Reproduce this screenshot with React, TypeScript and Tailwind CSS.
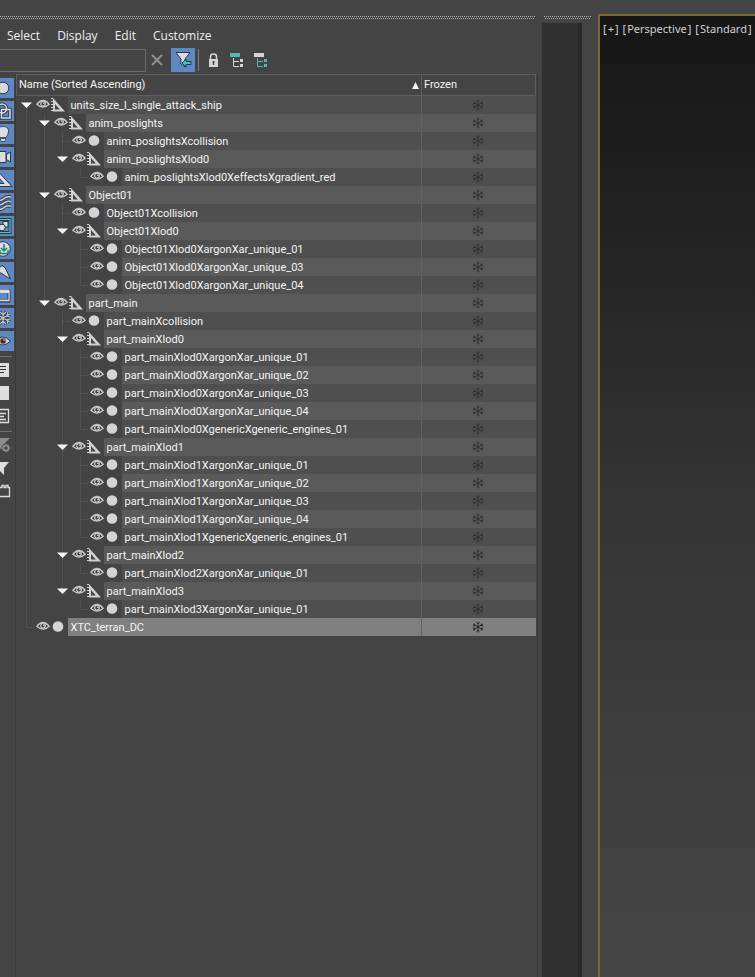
import type { ReactNode } from "react";

type Node = { name: string; children?: Node[]; selected?: boolean };

const leaf = (name: string): Node => ({ name });

const scene: Node[] = [
  {
    name: "units_size_l_single_attack_ship",
    children: [
      {
        name: "anim_poslights",
        children: [
          leaf("anim_poslightsXcollision"),
          { name: "anim_poslightsXlod0", children: [leaf("anim_poslightsXlod0XeffectsXgradient_red")] },
        ],
      },
      {
        name: "Object01",
        children: [
          leaf("Object01Xcollision"),
          {
            name: "Object01Xlod0",
            children: [
              leaf("Object01Xlod0XargonXar_unique_01"),
              leaf("Object01Xlod0XargonXar_unique_03"),
              leaf("Object01Xlod0XargonXar_unique_04"),
            ],
          },
        ],
      },
      {
        name: "part_main",
        children: [
          leaf("part_mainXcollision"),
          {
            name: "part_mainXlod0",
            children: [
              leaf("part_mainXlod0XargonXar_unique_01"),
              leaf("part_mainXlod0XargonXar_unique_02"),
              leaf("part_mainXlod0XargonXar_unique_03"),
              leaf("part_mainXlod0XargonXar_unique_04"),
              leaf("part_mainXlod0XgenericXgeneric_engines_01"),
            ],
          },
          {
            name: "part_mainXlod1",
            children: [
              leaf("part_mainXlod1XargonXar_unique_01"),
              leaf("part_mainXlod1XargonXar_unique_02"),
              leaf("part_mainXlod1XargonXar_unique_03"),
              leaf("part_mainXlod1XargonXar_unique_04"),
              leaf("part_mainXlod1XgenericXgeneric_engines_01"),
            ],
          },
          { name: "part_mainXlod2", children: [leaf("part_mainXlod2XargonXar_unique_01")] },
          { name: "part_mainXlod3", children: [leaf("part_mainXlod3XargonXar_unique_01")] },
        ],
      },
    ],
  },
  { name: "XTC_terran_DC", selected: true },
];

type Row = { node: Node; guides: boolean[]; last: boolean };

function flatten(nodes: Node[], guides: boolean[] = []): Row[] {
  return nodes.flatMap((node, i) => {
    const last = i === nodes.length - 1;
    return [{ node, guides, last }, ...flatten(node.children ?? [], [...guides, !last])];
  });
}

const rows = flatten(scene);

function Guide({ on }: { on: boolean }) {
  return (
    <svg className="h-[18px] w-[18px] shrink-0" viewBox="0 0 18 18" aria-hidden="true">
      {on && <path d="M9.5 0V18" stroke="#525252" />}
    </svg>
  );
}

function Branch({ row }: { row: Row }) {
  const top = row.guides.length === 0 && row.node.children;
  return (
    <svg className="h-[18px] w-[18px] shrink-0" viewBox="0 0 18 18" aria-hidden="true">
      {!top && <path d="M9.5 0V9" stroke="#525252" />}
      {!row.last && <path d="M9.5 9V18" stroke="#525252" />}
      {row.node.children ? (
        <path d="M4 6.500H15L9.500 12Z" fill="#f8f8f8" />
      ) : (
        <path d="M10 9.500H18" stroke="#5c5c5c" strokeDasharray="1 1" />
      )}
    </svg>
  );
}

function Eye() {
  return (
    <svg className="ml-px h-[14px] w-[14px] shrink-0" viewBox="0 0 14 14" aria-hidden="true">
      <path d="M.8 6.300Q7-1.300 13.200 6.300Q7 12 .8 6.300Z" fill="#3c3c3c" stroke="#c8c8c8" strokeWidth="1.300" />
      <circle cx="7" cy="5.800" r="2.300" fill="#3c3c3c" stroke="#d0d0d0" strokeWidth="1.200" />
      <circle cx="7.800" cy="5.200" r=".8" fill="#e0e0e0" />
    </svg>
  );
}

function Geometry() {
  return (
    <svg className="h-[14px] w-[16px] shrink-0" viewBox="0 0 16 14" aria-hidden="true">
      <circle cx="8" cy="6.500" r="5.300" fill="#d4d4d4" />
    </svg>
  );
}

function Helper() {
  return (
    <svg className="h-[14px] w-[16px] shrink-0" viewBox="0 0 16 14" aria-hidden="true">
      <path d="M3 0L15 13.500H3Z M5 6V11.500H9.800Z" fill="#d0d0d0" fillRule="evenodd" />
      <path d="M1 .5H3M1 3.500H3M1 6.500H3M1 9.500H3M1 12.500H3" stroke="#d0d0d0" />
    </svg>
  );
}

function Snowflake({ dark }: { dark?: boolean }) {
  return (
    <svg
      className="mx-auto block h-3 w-3"
      viewBox="0 0 12 12"
      fill="none"
      stroke={dark ? "#202020" : "#303030"}
      role="img"
      aria-label="Not frozen"
    >
      <path d="M6 .5V11.500M1.200 3.200L10.800 8.800M1.200 8.800L10.800 3.200M4.500 1.500L6 3L7.500 1.500M4.500 10.500L6 9L7.500 10.500M.8 5L3 4.500L2.500 2.500M11.200 7L9 7.500L9.500 9.500M.8 7L3 7.500L2.500 9.500M11.200 5L9 4.500L9.500 2.500" strokeWidth=".9" />
    </svg>
  );
}

const dark = "#26384f";
const filters: { label: string; art: ReactNode }[] = [
  { label: "Geometry", art: <circle cx="3" cy="10" r="5.800" fill="#d9d9d9" stroke={dark} /> },
  {
    label: "Shapes",
    art: (
      <g fill="none" stroke={dark} strokeWidth="3.400">
        <circle cx="2" cy="7.500" r="4.500" />
        <path d="M1.500 8.500H10V17H1.500Z" />
        <g stroke="#dddddd" strokeWidth="1.500">
          <circle cx="2" cy="7.500" r="4.500" />
          <path d="M1.500 8.500H10V17H1.500Z" />
        </g>
      </g>
    ),
  },
  {
    label: "Lights",
    art: (
      <g stroke={dark} strokeWidth=".8" fill="#dddddd">
        <path d="M0 13.500Q-1 11-2.500 9Q-3 2.500 3 2.500T8.500 8Q8 11 6 13.500Z" />
        <path d="M.5 14.500H5.500V16L4.500 17.500H1.500L.5 16Z" />
      </g>
    ),
  },
  {
    label: "Cameras",
    art: (
      <g fill="#dddddd" stroke={dark}>
        <path d="M-2 4.500H6V15.500H-2Z" />
        <path d="M6.500 7.500L10.500 5V15L6.500 12.500Z" />
      </g>
    ),
  },
  {
    label: "Helpers",
    art: <path d="M-5-2L12 16.500H-5Z M-2 7V13.500H4Z" fill="#dddddd" stroke={dark} fillRule="evenodd" />,
  },
  {
    label: "Space warps",
    art: (
      <g fill="none">
        <path d="M-1 7Q2 8 4 5.500T11 4M-1 11.500Q2 12.500 4 10T11 8.500M-1 16Q2 17 4 14.500T11 13" stroke={dark} strokeWidth="3.400" />
        <path d="M-1 7Q2 8 4 5.500T11 4M-1 11.500Q2 12.500 4 10T11 8.500M-1 16Q2 17 4 14.500T11 13" stroke="#d0d0d0" strokeWidth="1.500" />
      </g>
    ),
  },
  {
    label: "Groups",
    art: (
      <g fill="none">
        <path d="M-2 3.500H10V16.500H-2" stroke={dark} strokeWidth="3" />
        <path d="M-2 3.500H10V16.500H-2" stroke="#5cc4b6" strokeWidth="1.200" />
        <path d="M3 5.500H8V11H3Z" fill="#dddddd" stroke={dark} />
        <circle cx="2" cy="11.500" r="3.300" fill="#dddddd" stroke={dark} />
      </g>
    ),
  },
  {
    label: "Containers",
    art: (
      <g>
        <circle cx="3" cy="10" r="7.300" fill="#dddddd" stroke={dark} />
        <path d="M4 5V12M1 9L4 12L7 9M0 11V14.500H8V11" fill="none" stroke="#168070" strokeWidth="1.500" />
      </g>
    ),
  },
  { label: "Bones", art: <path d="M-3 8L2 3.500L5 5.500L10.500 17L-1 10Z" fill="#dddddd" stroke={dark} /> },
  {
    label: "Hidden objects",
    art: (
      <g fill="none">
        <path d="M-2 5.500H9V16H-2" stroke={dark} strokeWidth="3" />
        <path d="M-2 4.500H9.500V8H-2Z" fill="#dddddd" />
        <path d="M-2 15.500H9V6" stroke="#dddddd" strokeWidth="1.300" />
      </g>
    ),
  },
  {
    label: "Frozen objects",
    art: (
      <g fill="none">
        <path d="M3 3V17M-4 6L10 14M-4 14L10 6M0 4L3 7L6 4M0 16L3 13L6 16M10 9L7 8L8 4M10 11L7 12L8 16" stroke={dark} strokeWidth="2.600" />
        <path d="M3 3V17M-4 6L10 14M-4 14L10 6M0 4L3 7L6 4M0 16L3 13L6 16M10 9L7 8L8 4M10 11L7 12L8 16" stroke="#c4c4c4" strokeWidth="1.200" />
      </g>
    ),
  },
  {
    label: "Visibility",
    art: (
      <g>
        <path d="M-6 10Q2 2 10.500 10Q2 18-6 10Z" fill="#dddddd" stroke={dark} />
        <circle cx="3" cy="10" r="3" fill="#33302c" stroke="#a38c70" />
        <circle cx="4" cy="9" r=".8" fill="#eeeeee" />
      </g>
    ),
  },
];

const actions: { label: string; art: ReactNode }[][] = [
  [
    {
      label: "Select all",
      art: (
        <g>
          <path d="M0 3H9V17H0Z" fill="#dddddd" />
          <path d="M0 6.500H6M0 9.500H6M0 12.500H4" stroke="#333333" />
        </g>
      ),
    },
    { label: "Select none", art: <path d="M0 3H9V17H0Z" fill="#dddddd" /> },
    {
      label: "Invert selection",
      art: <path d="M0 3.500H8.500V16.500H0M0 7.500H6M0 10.500H4M0 13.500H6" fill="none" stroke="#dddddd" strokeWidth="1.300" />,
    },
  ],
  [
    {
      label: "Configure filter",
      art: (
        <g fill="#8c8c8c">
          <path d="M-6 3H10L4 9V17L0 13V10Z" />
          <circle cx="6" cy="13" r="4.500" fill="#444444" />
          <circle cx="6" cy="13" r="2.600" fill="none" stroke="#8c8c8c" strokeWidth="1.800" />
          <path d="M6 8.500V17.500M1.500 13H10.500M3 10L9 16M9 10L3 16" stroke="#8c8c8c" />
          <circle cx="6" cy="13" r="1.500" fill="#444444" />
        </g>
      ),
    },
    { label: "Filter", art: <path d="M-4 4H9L4 10V17L0 13V10Z" fill="#dddddd" /> },
    {
      label: "Extensions",
      art: <path d="M0 6.500H2V4.500H4V6.500H6V4.500H8V6.500H9.500V15.500H0" fill="none" stroke="#dddddd" strokeWidth="1.300" />,
    },
  ],
];

function Rail() {
  return (
    <nav aria-label="Display filters" className="flex w-4 shrink-0 flex-col gap-[3px] border-r border-[#3a3a3a] pt-1">
      {filters.map((f) => (
        <button key={f.label} type="button" aria-label={f.label} className="h-5 w-[14px] overflow-hidden bg-[#5e88c4]">
          <svg className="block h-5 w-[14px]" viewBox="0 0 14 20" aria-hidden="true">{f.art}</svg>
        </button>
      ))}
      {actions.map((group, i) => (
        <div key={i} className="flex flex-col gap-[3px]">
          <hr className="mt-[2px] w-3 border-t border-[#707070]" />
          {group.map((a) => (
            <button key={a.label} type="button" aria-label={a.label} className="h-5 w-[14px] overflow-hidden">
              <svg className="block h-5 w-[14px]" viewBox="0 0 14 20" aria-hidden="true">{a.art}</svg>
            </button>
          ))}
        </div>
      ))}
    </nav>
  );
}

function HierarchyIcon({ head, tail }: { head: string; tail: string }) {
  return (
    <svg className="h-4 w-4" viewBox="0 0 16 16" aria-hidden="true">
      <path d="M1 1H11V5H1Z" fill={head} />
      <path d="M4.500 6V14.500H10M4.500 9.500H10" fill="none" stroke={tail} />
      <path d="M11 7H14V10H11ZM11 12H14V15H11Z" fill={tail} />
    </svg>
  );
}

function Toolbar() {
  return (
    <div className="mb-px flex h-[26px] items-center">
      <input
        type="text"
        aria-label="Find"
        className="h-[23px] w-[146px] border border-l-0 border-[#6a6a6a] bg-[#444444] px-1 text-[11px] text-white outline-none"
      />
      <button type="button" aria-label="Clear search" className="mr-1 flex h-6 w-[21px] items-center justify-center">
        <svg className="h-3 w-3" viewBox="0 0 12 12" aria-hidden="true">
          <path d="M1 1L11 11M11 1L1 11" stroke="#929292" strokeWidth="1.800" />
        </svg>
      </button>
      <button type="button" aria-label="Filter selection" className="flex h-6 w-6 items-center justify-center bg-[#5e88c4]">
        <svg className="h-5 w-5" viewBox="0 0 20 20" aria-hidden="true">
          <path d="M3 2.500H17L12 9V17L8 14V9Z" fill="#dddddd" stroke={dark} />
          <path d="M9 13L13 9V11.500H18V14.500H13V17Z" fill="#48c4b4" stroke={dark} />
        </svg>
      </button>
      <span className="ml-[3px] h-[22px] w-px bg-[#808080]" />
      <div className="ml-[6px] flex gap-2">
        <button type="button" aria-label="Lock" className="h-4 w-4">
          <svg className="h-4 w-4" viewBox="0 0 16 16" aria-hidden="true">
            <path d="M5.500 8V4.500Q5.500 2 8.500 2T11.500 4.500V8" fill="none" stroke="#d5d5d5" strokeWidth="1.500" />
            <path d="M4 7H13V15H4Z" fill="#d5d5d5" />
            <path d="M8.500 9V13M7.500 10H9.500" stroke="#444444" strokeWidth="1.300" />
          </svg>
        </button>
        <button type="button" aria-label="Select children" className="h-4 w-4">
          <HierarchyIcon head="#4fb9ae" tail="#d5d5d5" />
        </button>
        <button type="button" aria-label="Select dependents" className="h-4 w-4">
          <HierarchyIcon head="#d5d5d5" tail="#4fb9ae" />
        </button>
      </div>
    </div>
  );
}

function rowColor(selected: boolean | undefined, i: number) {
  if (selected) return "bg-[#808080]";
  return i % 2 === 0 ? "bg-[#4f4f4f]" : "bg-[#5a5a5a]";
}

function Tree() {
  return (
    <table className="w-[520px] table-fixed border-collapse self-start font-[Roboto,sans-serif] text-[11px] leading-5 text-[#f4f4f4]">
      <colgroup>
        <col className="w-[405px]" />
        <col />
      </colgroup>
      <thead>
        <tr className="h-[21px]">
          <th scope="col" className="border border-[#5e5e5e] p-0 font-normal">
            <button type="button" className="flex w-full items-center justify-between pr-[2px] pl-[2px]">
              Name (Sorted Ascending)
              <svg className="h-[7px] w-[7px]" viewBox="0 0 7 7" aria-hidden="true">
                <path d="M3.500 0L7 7H0Z" fill="#f4f4f4" />
              </svg>
            </button>
          </th>
          <th scope="col" className="border border-[#5e5e5e] p-0 pl-[2px] text-left font-normal">Frozen</th>
        </tr>
      </thead>
      <tbody>
        {rows.map((row, i) => (
          <tr key={row.node.name} className="h-[18px]" aria-selected={!!row.node.selected}>
            <td className="p-0">
              <div className="flex h-[18px] items-center">
                {row.guides.map((on, g) => (
                  <Guide key={g} on={on} />
                ))}
                <Branch row={row} />
                <Eye />
                {row.node.children ? <Helper /> : <Geometry />}
                <span className={`ml-[2px] h-[18px] flex-1 pl-[3px] ${rowColor(row.node.selected, i)}`}>{row.node.name}</span>
              </div>
            </td>
            <td className={`border-l border-[#626262] p-0 pr-[2px] ${rowColor(row.node.selected, i)}`}>
              <Snowflake dark={row.node.selected} />
            </td>
          </tr>
        ))}
      </tbody>
    </table>
  );
}

function Grip() {
  return (
    <div className="flex h-[3px] flex-col justify-between">
      <div className="h-px bg-[repeating-linear-gradient(90deg,#b0b0b0_0px_1px,#444444_1px_2px)]" />
      <div className="h-px bg-[repeating-linear-gradient(90deg,#444444_0px_1px,#b0b0b0_1px_2px)]" />
    </div>
  );
}

const menus = ["Select", "Display", "Edit", "Customize"];
const viewportLabels = ["+", "Perspective", "Standard"];

export default function App() {
  return (
    <div className="flex min-h-screen bg-[#444444] font-['Noto_Sans',sans-serif] text-[#eeeeee]">
      <section aria-label="Scene explorer" className="flex w-[538px] shrink-0 flex-col pt-4">
        <div className="mr-[3px]">
          <Grip />
        </div>
        <div className="flex h-7 items-center gap-[17px] pt-[6px] pl-[7px] font-['Open_Sans',sans-serif] text-[12px] leading-4">
          {menus.map((m) => (
            <button key={m} type="button">{m}</button>
          ))}
        </div>
        <Toolbar />
        <div className="flex flex-1 border-r border-[#383838]">
          <Rail />
          <Tree />
        </div>
      </section>
      <div className="ml-1 flex w-10 shrink-0 flex-col pt-4">
        <div className="ml-[2px] -mr-[9px]">
          <Grip />
        </div>
        <div className="mt-1 flex-1 border-r-4 border-[#292929] bg-[#303030]" />
      </div>
      <main className="mt-[14px] ml-4 min-w-0 flex-1 overflow-hidden border-t-2 border-l-2 border-[#7a6834] bg-linear-to-b from-[#161616] via-[#343434] to-[#464646]">
        <div className="flex gap-1 pt-[5px] pl-[3px] text-[11px] leading-4 whitespace-nowrap text-[#d0d0d0]">
          {viewportLabels.map((label) => (
            <button key={label} type="button" className="flex gap-px">
              <span>[</span>
              <span>{label}</span>
              <span>]</span>
            </button>
          ))}
        </div>
      </main>
    </div>
  );
}
